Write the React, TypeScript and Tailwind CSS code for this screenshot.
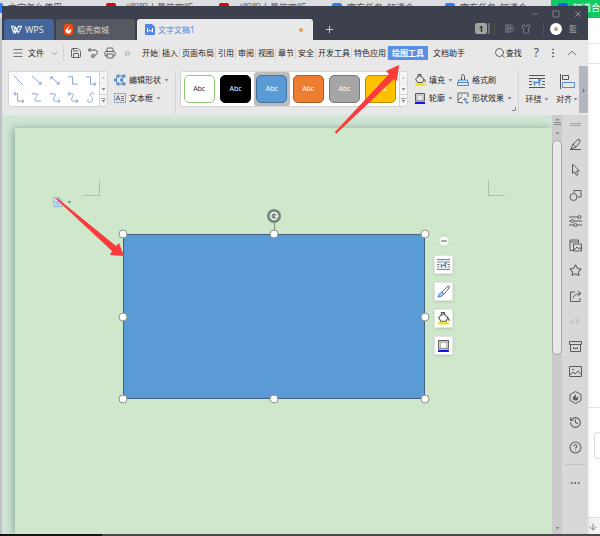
import type { ReactNode } from 'react';
import {
  ArrowDown,
  ChevronDown,
  ChevronUp,
  ChevronsRight,
  CircleHelp,
  Ellipsis,
  EllipsisVertical,
  History,
  Menu,
  Minus,
  Plus,
  Printer,
  Save,
  Search,
  Shirt,
  Square,
  Star,
  X,
} from 'lucide-react';

const browserTabs = [
  { title: '文字怎么使用', icon: 'bg-blue-500', tab: 'w-[113px]' },
  { title: '《阴阳大量第四版', icon: 'bg-red-600', tab: 'w-[113px]' },
  { title: '《阴阳大量第四版', icon: 'bg-red-600', tab: 'w-[113px]' },
  { title: '官方任务_知道合', icon: 'bg-blue-500', tab: 'w-[113px]' },
  { title: '官方任务_知道合', icon: 'bg-blue-500', tab: 'w-[113px]' },
  { title: '知道合', icon: 'bg-blue-600', tab: 'flex-1 bg-[#0fcb62] text-white' },
];

const menuItems = ['开始', '插入', '页面布局', '引用', '审阅', '视图', '章节', '安全', '开发工具', '特色应用'];

const shapeStyles = [
  'bg-white text-neutral-800 border-[#8fca72]',
  'bg-black text-white border-black',
  'bg-[#5b9bd5] text-white border-[#41719c]',
  'bg-[#ed7d31] text-white border-[#ae5a21]',
  'bg-[#a5a5a5] text-white border-[#787878]',
  'bg-[#ffc000] text-white border-[#bc8c00]',
];
const selectedStyle = 2;

// Connector previews, each drawn in a 12x12 box
const linePaths = [
  'M1 1L11 11',
  'M1 1L11 10M11 7V10H8',
  'M2 2L11 10M2 5V2H5M11 7V10H8',
  'M1 2H6V10H12',
  'M1 2H6V10H12M10 8L12 10L10 12',
  'M1 2H5V10H12M3 0L1 2L3 4M10 8L12 10L10 12',
  'M1 2H7C9 3 4 6 4 9C4 10 8 10 11 10',
  'M1 2H6C9 3 4 6 5 9C6 10 8 10 12 10M10 8L12 10L10 12',
  'M1 2H6C9 3 4 6 5 9C6 10 8 10 12 10M3 0L1 2L3 4M10 8L12 10L10 12',
  'M10 2C7 -1 4 3 7 5C10 8 7 12 4 11C2 10 3 8 4 8',
];

function Caret() {
  return (
    <svg className="h-[3px] w-[5px] shrink-0" viewBox="0 0 6 4" fill="#888">
      <path d="M0.500 0H5.500L3 3.500Z" />
    </svg>
  );
}

function FillIcon({ className }: { className: string }) {
  return (
    <svg className={className} viewBox="0 0 12 12" fill="none" stroke="#555">
      <path d="M1.500 5L6 1.500L10 5L8.500 8.500H3.500ZM4 3V0.500H7V3M10 5L11.500 8" />
      <path d="M1 10.500H11" stroke="#e8e000" strokeWidth="2" />
    </svg>
  );
}

function OutlineIcon({ className }: { className: string }) {
  return (
    <svg className={className} viewBox="0 0 12 12" fill="none">
      <path d="M1.500 1.500H10.500V9H1.500Z" stroke="#5a5a5a" />
      <path d="M3 3H9V8.500H3Z" stroke="#a5a5a5" />
      <path d="M1 11H11" stroke="#1414e6" strokeWidth="2" />
    </svg>
  );
}

function WrapIcon({ className }: { className: string }) {
  return (
    <svg className={className} viewBox="0 0 16 15" fill="none" stroke="#555">
      <path d="M0 1.500H16M0 4.500H16M0 7.500H3M13 7.500H16M0 10.500H3M13 10.500H16M0 13.500H16" />
      <path d="M4 5H12V12H4Z" fill="#ececec" stroke="none" />
      <path d="M5.500 11.500V8.500H10.500V11.500M10 8.500V5.500L12 6.500M4.500 7.500L6 8.500" stroke="#4a86d8" strokeWidth="1.500" />
    </svg>
  );
}

function EditShapeIcon() {
  return (
    <svg className="size-3" viewBox="0 0 12 12" fill="none" stroke="#3f7cc0">
      <path d="M4 2H10L7.500 6L10 10H4L1.500 6Z" />
      <path d="M3 1H5V3H3ZM9 1H11V3H9ZM9 9H11V11H9ZM3 9H5V11H3ZM0.500 5H2.500V7H0.500ZM6.500 5H8.500V7H6.500Z" fill="#e8e8e8" />
    </svg>
  );
}

function TextBoxIcon() {
  return (
    <svg className="size-3" viewBox="0 0 12 12" fill="none" stroke="#555">
      <rect x="0.500" y="1.500" width="11" height="9" stroke="#6b8fc4" strokeDasharray="2 1" />
      <path d="M2 8.500L4 3.500L6 8.500M2.700 7H5.300M7 4.500H10M7 6.500H10M7 8.500H10" strokeWidth="0.800" />
    </svg>
  );
}

function FormatBrushIcon() {
  return (
    <svg className="size-3" viewBox="0 0 12 12" fill="none" stroke="#4a86c8">
      <path d="M1.500 8.500V6H10.500V8.500M0.500 8.500H11.500V11.500H0.500Z" />
      <path d="M4.500 6V2.500C4.500 0 7.500 0 7.500 2.500V6" stroke="#555" />
    </svg>
  );
}

function ShapeEffectIcon() {
  return (
    <svg className="size-3" viewBox="0 0 12 12" fill="none" stroke="#666">
      <path d="M5 10.500H1V1H11V5M1 8L5 5M4 3H5" />
      <path d="M8 5.500V9.500M6 7.500H10M10 9V12M8.500 10.500H11.500M5 10V12" stroke="#3f86cc" />
    </svg>
  );
}

function AlignIcon() {
  return (
    <svg className="h-[15px] w-4" viewBox="0 0 16 15" fill="none" stroke="#555">
      <path d="M1.500 0V15M3.500 1.500H9.500V5.500H3.500Z" />
      <path d="M3.500 8.500H15.500V13.500H3.500Z" stroke="#5a8fd0" />
    </svg>
  );
}

function RibbonButton({ icon, label, caret = true }: { icon: ReactNode; label: string; caret?: boolean }) {
  return (
    <button className="flex h-[18px] items-center gap-[3px] whitespace-nowrap">
      {icon}
      <span>{label}</span>
      {caret && <Caret />}
    </button>
  );
}

function GallerySpinner() {
  return (
    <div className="flex w-2 shrink-0 flex-col divide-y divide-neutral-300 border-l border-neutral-300 bg-neutral-100">
      <button aria-label="上一行" className="flex flex-1 items-center justify-center opacity-40">
        <span className="flex rotate-180"><Caret /></span>
      </button>
      <button aria-label="下一行" className="flex flex-1 items-center justify-center"><Caret /></button>
      <button aria-label="更多" className="flex flex-1 flex-col items-center justify-center gap-px">
        <span className="h-px w-[5px] bg-neutral-400" />
        <Caret />
      </button>
    </div>
  );
}

function TitleBar() {
  return (
    <header className="flex h-[34px] shrink-0 bg-[#3d414d] pl-0.5 text-[8px] text-neutral-300">
      <nav className="flex items-end gap-0.5">
        <button className="flex h-[21px] w-[50px] items-center gap-[3px] rounded-t-[3px] bg-[#44659b] pl-[7px] text-[9px] text-neutral-200">
          <svg className="h-[9px] w-[11px]" viewBox="0 0 12 9" fill="none" stroke="#e8edf5" strokeWidth="1.300">
            <path d="M0 1H3L5 8L8 1H11.500L8 8L5 2L3 8L0.500 1" />
          </svg>
          WPS
        </button>
        <button className="flex h-[21px] w-[79px] items-center gap-1 rounded-t-[3px] bg-[#575962] pl-2">
          <svg className="h-[11px] w-[9px]" viewBox="0 0 9 11">
            <rect width="9" height="11" rx="2" fill="#f04a14" />
            <path d="M5 2C6 4 3 5 4 7C5 6 6 5 7 5C8 8 6 9.500 4.500 9.500C2 9.500 1 7 2 5C3 5 4 4 5 2Z" fill="#fff" />
          </svg>
          稻壳商城
        </button>
        <button className="flex h-[21px] w-[176px] items-center gap-[3px] rounded-t-[3px] bg-[#e9e9e9] pr-2.5 pl-2 text-[#5486e0]">
          <svg className="h-[11px] w-2.5" viewBox="0 0 10 11">
            <path d="M1 0H7L10 3V10Q10 11 9 11H1Q0 11 0 10V1Q0 0 1 0Z" fill="#4c86ea" />
            <path d="M2.500 4V8L5 6L7.500 8V4" fill="none" stroke="#fff" />
          </svg>
          文字文稿1
          <span className="ml-auto size-1 rounded-full bg-[#e59a4c]" />
        </button>
        <button aria-label="新建" className="flex h-[21px] w-7 items-center justify-center">
          <Plus size={11} strokeWidth={2} />
        </button>
      </nav>
      <div className="ml-auto flex flex-col items-end pr-[5px] text-neutral-400">
        <div className="flex h-[15px] items-center gap-[13px]">
          <button aria-label="最小化"><Minus size={8} /></button>
          <button aria-label="最大化"><Square size={8} /></button>
          <button aria-label="关闭"><X size={10} /></button>
        </div>
        <div className="flex h-[15px] items-center pr-1.5">
          <span className="flex h-[11px] w-3 items-center justify-center rounded-xs bg-neutral-400 font-bold text-neutral-800">1</span>
          <span className="mr-1 ml-px h-[11px] w-0.5 bg-neutral-500" />
          <span className="mr-2.5 h-3 w-px bg-neutral-600" />
          <svg className="mr-[7px] size-[9px]" viewBox="0 0 10 10" fill="none" stroke="#858994">
            <path d="M1 1H5C11 1 11 9 5 9H1ZM3 3V7H5C8 7 8 3 5 3ZM3 5H7" />
          </svg>
          <Shirt size={10} strokeWidth={2} className="text-[#858994]" />
          <span className="mr-1.5 ml-3 h-3 w-px bg-neutral-600" />
          <span className="mr-[7px] flex size-3 items-center justify-center rounded-full bg-white">
            <span className="size-1 rounded-xs bg-[#b39a86]" />
          </span>
          <span>藍</span>
        </div>
      </div>
    </header>
  );
}

function MenuBar() {
  return (
    <div className="flex h-[26px] shrink-0 items-center pl-2.5 text-[8px] whitespace-nowrap">
      <button className="flex items-center gap-1">
        <Menu size={12} strokeWidth={1.5} className="text-neutral-600" />
        <span>文件</span>
        <ChevronDown size={9} strokeWidth={1.5} className="ml-0.5 text-neutral-600" />
      </button>
      <span className="mr-1.5 ml-1 h-4 w-px bg-neutral-300" />
      <div className="flex items-center gap-[5px] text-neutral-600">
        <button aria-label="保存"><Save size={12} strokeWidth={1.75} /></button>
        <button aria-label="撤销">
          <svg className="size-3" viewBox="0 0 12 12" fill="none" stroke="currentColor">
            <path d="M3.500 1L1.500 3L3.500 5M1.500 3H8C11 3 11 8 8 8H7.500" />
            <circle cx="6" cy="9" r="1.500" />
          </svg>
        </button>
        <button aria-label="打印"><Printer size={12} strokeWidth={1.75} /></button>
        <button aria-label="更多命令" className="ml-0.5"><ChevronsRight size={9} strokeWidth={1.5} /></button>
      </div>
      <nav className="ml-2 flex items-center">
        {menuItems.map((item) => (
          <button key={item} className="border-r border-neutral-300 pr-px pl-0.5">{item}</button>
        ))}
        <button className="h-3.5 bg-[#5b8ee5] px-1 font-bold text-white">绘图工具</button>
        <button className="px-[5px]">文档助手</button>
      </nav>
      <div className="ml-auto flex items-center pr-[9px] text-neutral-600">
        <button className="flex items-center text-neutral-800"><Search size={12} strokeWidth={1.75} className="text-neutral-600" />查找</button>
        <button aria-label="帮助" className="ml-3 text-[12px]">?</button>
        <button aria-label="更多" className="ml-2"><EllipsisVertical size={12} /></button>
        <button aria-label="收起" className="ml-1.5"><ChevronUp size={14} strokeWidth={1.5} /></button>
      </div>
    </div>
  );
}

function Ribbon() {
  return (
    <div className="flex h-[49px] shrink-0 pl-1.5 text-[8px]">
      <div className="mt-[5px] flex h-9 w-[100px] shrink-0 overflow-hidden rounded-[3px] border border-neutral-300 bg-white">
        <div className="grid flex-1 grid-cols-5 place-items-center">
          {linePaths.map((path) => (
            <button key={path} aria-label="线条">
              <svg className="size-[11px] overflow-visible" viewBox="0 0 12 12" fill="none" stroke="#7f9ccc">
                <path d={path} />
              </svg>
            </button>
          ))}
        </div>
        <GallerySpinner />
      </div>
      <div className="mt-[5px] ml-1.5 w-[61px] shrink-0">
        <RibbonButton icon={<EditShapeIcon />} label="编辑形状" />
        <RibbonButton icon={<TextBoxIcon />} label="文本框" />
      </div>
      <span className="mt-1 mr-1 h-11 w-px bg-neutral-300" />
      <div className="mt-[5px] flex h-9 w-[228px] shrink-0 overflow-hidden rounded-[3px] border border-neutral-300 bg-white">
        <div className="grid flex-1 grid-cols-6">
          {shapeStyles.map((style, i) => (
            <div key={style} className={`flex items-center justify-center ${i === selectedStyle ? 'rounded-[3px] bg-[#bdbdbd]' : ''}`}>
              <button className={`h-7 w-[31px] rounded-[5px] border font-["Open_Sans",sans-serif] text-[7px] ${style}`}>Abc</button>
            </div>
          ))}
        </div>
        <GallerySpinner />
      </div>
      <div className="mt-[5px] ml-1.5 w-[43px] shrink-0">
        <RibbonButton icon={<FillIcon className="size-3" />} label="填充" />
        <RibbonButton icon={<OutlineIcon className="size-3" />} label="轮廓" />
      </div>
      <div className="mt-[5px] w-[55px] shrink-0">
        <RibbonButton icon={<FormatBrushIcon />} label="格式刷" caret={false} />
        <RibbonButton icon={<ShapeEffectIcon />} label="形状效果" />
      </div>
      <svg className="mt-[41px] size-1 shrink-0" viewBox="0 0 4 4" fill="none" stroke="#888"><path d="M0 3.500H3.500V0" /></svg>
      <span className="mt-1 mr-1 ml-0.5 h-11 w-px bg-neutral-300" />
      <button className="mt-2 flex w-7 shrink-0 flex-col items-center gap-1">
        <WrapIcon className="h-[15px] w-4" />
        <span className="flex items-center gap-0.5">环绕<Caret /></span>
      </button>
      <button className="mt-2 ml-1 flex w-6 shrink-0 flex-col items-center gap-1">
        <AlignIcon />
        <span className="flex items-center gap-px">对齐<Caret /></span>
      </button>
      <button aria-label="向右滚动" className="ml-auto mb-0.5 flex w-[9px] items-center justify-center bg-[#b4b7c1]">›</button>
    </div>
  );
}

function ShapeHandle({ className }: { className: string }) {
  return <span className={`absolute size-[9px] -translate-1/2 rounded-full border border-[#8a938a] bg-white ${className}`} />;
}

function BrushIcon() {
  return (
    <svg className="size-[13px]" viewBox="0 0 13 13" fill="none" stroke="#666">
      <path d="M5 7L11 1Q13 1 12 3L7 9Z" />
      <path d="M5 7L7 9Q5 12 1 12Q2 8 5 7Z" fill="#a9c8f2" stroke="#4a86d8" />
    </svg>
  );
}

const floatButton = 'flex size-[19px] items-center justify-center border border-neutral-200 bg-white shadow-sm';

function Page() {
  return (
    <main className="relative mt-[13px] ml-[13px] flex-1 bg-[#cfe8cc] shadow-[-2px_0_8px_#8fac95]">
      {/* Margin corners */}
      <span className="absolute top-[52px] left-[68px] h-4 w-[17px] border-r border-b border-[#a9c2a8]" />
      <span className="absolute top-[52px] left-[473px] h-4 w-[17px] border-b border-l border-[#a9c2a8]" />

      <button aria-label="段落布局" className="absolute top-[69px] left-[38px] flex items-center gap-1">
        <svg className="size-2.5" viewBox="0 0 10 10" fill="#c8dff0" stroke="#8db4d2">
          <path d="M1 0.500H6L9 3.500V9.500H1ZM6 1V4H9M3 5H6M3 7H7" />
        </svg>
        <Caret />
      </button>

      {/* Selected rectangle */}
      <div className="absolute top-[106px] left-[108px] h-[165px] w-[302px] bg-[#5b9bd5] outline -outline-offset-1 outline-[#41607e]">
        <span className="absolute -top-3 left-1/2 h-3 w-px bg-[#7c8f80]" />
        <svg className="absolute -top-[25px] left-1/2 size-3.5 -translate-x-1/2" viewBox="0 0 14 14" fill="none">
          <circle cx="7" cy="7" r="7" fill="#75877a" />
          <path d="M9.500 9.500A3.500 3.500 0 1 1 10.500 6.500" stroke="#fff" strokeWidth="1.500" />
          <path d="M7 6.500H12L10 9.500Z" fill="#fff" />
        </svg>
        <ShapeHandle className="top-0 left-0" />
        <ShapeHandle className="top-0 left-1/2" />
        <ShapeHandle className="top-0 left-full" />
        <ShapeHandle className="top-1/2 left-0" />
        <ShapeHandle className="top-1/2 left-full" />
        <ShapeHandle className="top-full left-0" />
        <ShapeHandle className="top-full left-1/2" />
        <ShapeHandle className="top-full left-full" />
      </div>

      <div className="absolute top-[107px] left-[419px] flex flex-col items-center gap-2">
        <button aria-label="收起工具" className="flex size-3 items-center justify-center rounded-full border border-[#c5cfc4] bg-[#f3f8f2]">
          <Minus size={8} strokeWidth={3} className="text-neutral-600" />
        </button>
        <button aria-label="环绕" className={floatButton}><WrapIcon className="size-[13px]" /></button>
        <button aria-label="样式" className={floatButton}><BrushIcon /></button>
        <button aria-label="填充" className={floatButton}><FillIcon className="size-[13px]" /></button>
        <button aria-label="轮廓" className={floatButton}><OutlineIcon className="size-[13px]" /></button>
      </div>
    </main>
  );
}

function ScrollBar() {
  return (
    <div className="flex w-2.5 shrink-0 flex-col items-center bg-[#cbcbcb]">
      <svg className="mt-1 h-1.5 w-[7px]" viewBox="0 0 7 6" fill="#888"><path d="M1 0H6L3.500 2ZM0 3H7V4H0ZM0 5H7V6H0Z" /></svg>
      <button aria-label="向上滚动" className="mt-1.5 rotate-180"><Caret /></button>
      <div className="mt-1.5 h-[215px] w-2.5 rounded-full border border-[#a4a4a4] bg-[#e9e9e9]" />
      <button aria-label="向下滚动" className="mt-auto mb-1"><Caret /></button>
    </div>
  );
}

function PanelIcon({ children }: { children: ReactNode }) {
  return (
    <svg className="size-[13px]" viewBox="0 0 13 13" fill="none" stroke="currentColor">
      {children}
    </svg>
  );
}

function SidePanel() {
  const icon = { size: 13, strokeWidth: 1.9 };

  return (
    <aside className="flex w-[26px] shrink-0 flex-col items-center bg-[#d8d8d8] text-[#5c5c5c]">
      <span className="mt-2 h-[3px] w-[11px] border-y border-neutral-400" />
      <div className="mt-3 flex h-[316px] flex-col items-center justify-between">
        <button aria-label="编辑">
          <PanelIcon><path d="M2 11L4 6L9 1.500Q12 1 11 4L7 9L2 11ZM4 6L7 9M1 11.500H12" /></PanelIcon>
        </button>
        <button aria-label="选择">
          <PanelIcon><path d="M3.500 1V10.500L5.500 8.500L7.500 12.500L9 11.500L7.500 8H10.500Z" /></PanelIcon>
        </button>
        <button aria-label="形状">
          <PanelIcon><circle cx="4.500" cy="8" r="3.500" /><path d="M5 4V1.500H12V8H8.500" /></PanelIcon>
        </button>
        <button aria-label="属性">
          <PanelIcon>
            <path d="M0 3H9M0 7H2M5 7H13M0 11H5M8 11H13" />
            <circle cx="10.500" cy="3" r="1.500" />
            <circle cx="3.500" cy="7" r="1.500" />
            <circle cx="6.500" cy="11" r="1.500" />
          </PanelIcon>
        </button>
        <button aria-label="图库">
          <PanelIcon><path d="M4 11.500H1V1H9.500V4M1 3H9.500M4.500 5H12.500V12H4.500ZM5 11L8 8L9.500 10L11 8.500L12 10" /></PanelIcon>
        </button>
        <button aria-label="收藏"><Star {...icon} /></button>
        <button aria-label="分享">
          <PanelIcon><path d="M6 2H1.500V11.500H11V8M4 8Q5 4 11.500 3.500M9 1L12 3.500L9 6" /></PanelIcon>
        </button>
        <button aria-label="翻译" disabled className="h-[13px] text-[7px] leading-none text-[#bdbdbd]">a字</button>
        <button aria-label="归档">
          <PanelIcon><path d="M0.500 1.500H12.500V4.500H0.500ZM1.500 4.500V11.500H11.500V4.500M4.500 7V8.500H8.500V7" /></PanelIcon>
        </button>
        <button aria-label="图片">
          <PanelIcon><path d="M0.500 1.500H12.500V11.500H0.500ZM1 10L4 7L6 9L9 6L12 9.500" /><circle cx="4" cy="4.500" r="0.500" /></PanelIcon>
        </button>
        <button aria-label="稻壳">
          <PanelIcon>
            <path d="M6.500 0.500L12 3.500V9.500L6.500 12.500L1 9.500V3.500Z" />
            <path d="M6.500 3C8 5 6 6 7 7L9 5.500C10 8 8.500 9.500 6.500 9.500C4 9.500 3 7 4.500 5.500C6 5 6 4 6.500 3Z" fill="currentColor" stroke="none" />
          </PanelIcon>
        </button>
        <button aria-label="历史"><History {...icon} /></button>
        <button aria-label="帮助"><CircleHelp {...icon} /></button>
      </div>
      <span className="mt-2.5 h-px w-5 bg-[#c2c2c2]" />
      <button aria-label="更多" className="mt-3"><Ellipsis size={12} /></button>
    </aside>
  );
}

/** Browser window that shows around the edges of the editor */
function BrowserBackdrop() {
  return (
    <div className="absolute inset-0 flex flex-col overflow-hidden bg-white">
      <div className="-ml-[14px] flex h-[18px] bg-[#dcdee0] text-[9px] leading-[15px] text-neutral-600">
        {browserTabs.map((tab, i) => (
          <div key={i} className={`flex shrink-0 gap-[5px] pl-[7px] whitespace-nowrap ${tab.tab}`}>
            <span className={`mt-[3px] size-2.5 rounded-xs ${tab.icon}`} />
            <span>{tab.title}</span>
          </div>
        ))}
      </div>
      <div className="flex flex-1 justify-between">
        <div className="w-0.5 bg-[#c6c9cb]" />
        <div className="flex w-3 flex-col">
          <div className="mt-[25px] h-[21px] border-y border-[#dfe3e6]" />
          <div className="mt-auto h-[111px] border-y border-[#dfe3e6] pt-6 pl-1.5">
            <div className="h-[27px] rounded-l-sm border border-r-0 border-[#d5dfe4]" />
          </div>
          <div className="flex h-[18px] items-center bg-[#f2f2f2]">
            <ArrowDown size={10} className="text-neutral-500" />
          </div>
        </div>
      </div>
    </div>
  );
}

/** Two red pointers laid over the window */
function Pointers() {
  return (
    <svg className="pointer-events-none absolute top-0 left-0 h-[536px] w-[600px]" viewBox="0 0 600 536" fill="#fb3b3b">
      <path d="M399 65L386 71L389 74L335 132L336 134L394 79L397 81Z" />
      <path d="M124 256L119 243L116 246L57 198L56 199L112 251L110 255Z" />
    </svg>
  );
}

export default function App() {
  return (
    <div className='relative flex h-screen flex-col overflow-hidden font-["Noto_Sans","Noto_Sans_CJK_SC",sans-serif] text-neutral-800'>
      <BrowserBackdrop />

      <div className="relative mt-1.5 mr-3 ml-0.5 flex min-h-0 flex-1 flex-col bg-[#e8e8e8] shadow-md">
        <TitleBar />
        <MenuBar />
        <Ribbon />
        <div className="flex min-h-0 flex-1">
          <div className="flex min-w-0 flex-1 overflow-hidden bg-[#d0e6d6]">
            <Page />
          </div>
          <ScrollBar />
          <SidePanel />
        </div>
      </div>

      {/* Taskbar edge */}
      <div className="relative flex h-0.5 shrink-0 bg-[#4a4a4a]">
        <span className="w-[102px] bg-[#151515]" />
      </div>

      <Pointers />
    </div>
  );
}
